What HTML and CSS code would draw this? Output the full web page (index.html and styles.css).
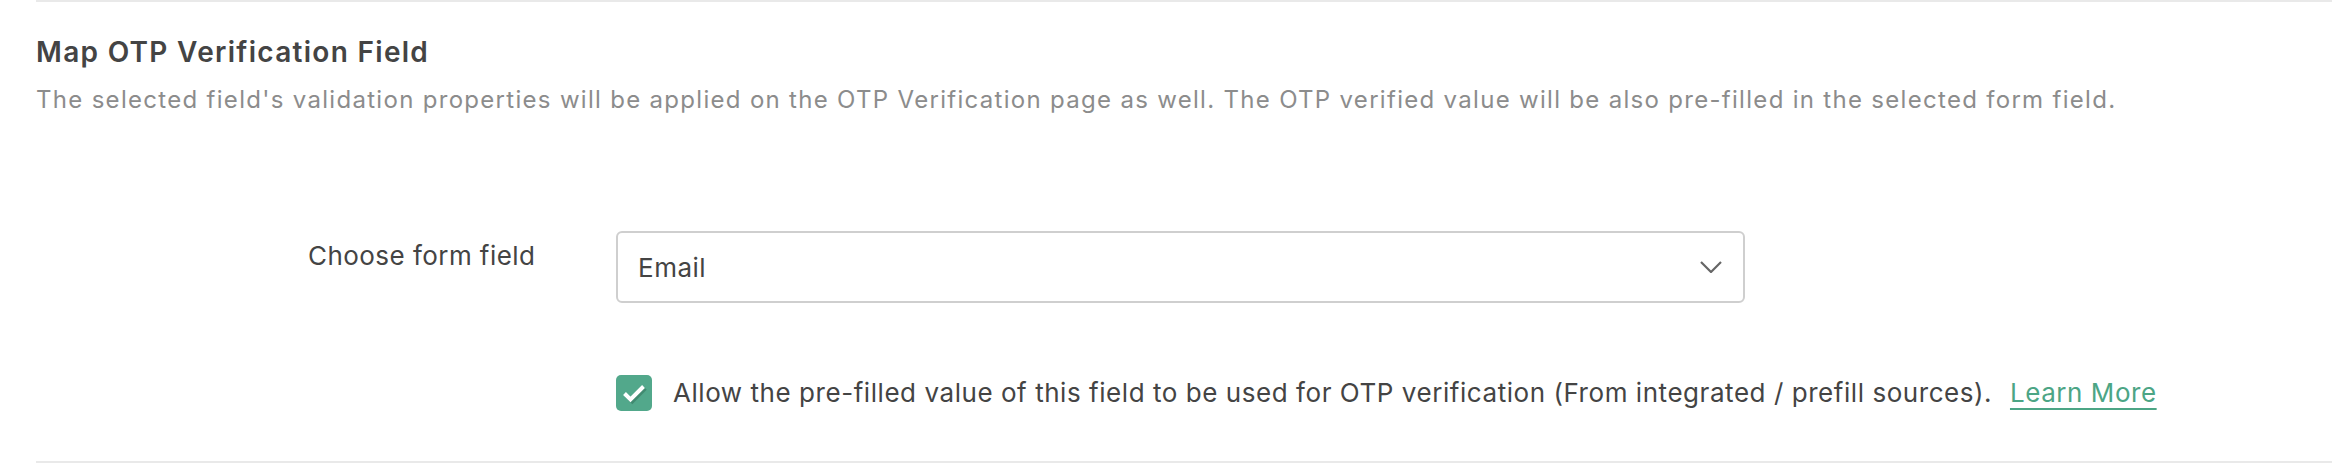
FILE: index.html
```html
<!DOCTYPE html>
<html lang="en">
<head>
    <meta charset="UTF-8">
    <title>Map OTP Verification Field</title>
    <link rel="stylesheet" href="styles.css">
</head>
<body>
    <div class="section">
        <h2 class="section-title">Map OTP Verification Field</h2>
        <p class="section-desc">The selected field's validation properties will be applied on the OTP Verification page as well. The OTP verified value will be also pre-filled in the selected form field.</p>

        <div class="form-row">
            <label class="form-label">Choose form field</label>
            <div class="form-control">
                <div class="select-box">
                    <span class="select-value">Email</span>
                    <svg class="select-arrow" width="22" height="12" viewBox="0 0 22 12">
                        <path d="M1 1 L11 11 L21 1" fill="none" stroke="#666" stroke-width="2.2"/>
                    </svg>
                </div>
            </div>
        </div>

        <div class="check-row">
            <span class="checkbox">
                <svg width="36" height="36" viewBox="0 0 36 36">
                    <path d="M9 19 L15 25 L28 12" fill="none" stroke="#2f6e58" stroke-width="4" stroke-opacity="0.5" transform="translate(1.3 1.3)"/>
                    <path d="M8.5 18.5 L14.5 24.5 L27.5 11.5" fill="none" stroke="#fff" stroke-width="4"/>
                </svg>
            </span>
            <span class="check-text">Allow the pre-filled value of this field to be used for OTP verification (From integrated / prefill sources). <a class="learn-more" href="#">Learn More</a></span>
        </div>
    </div>
</body>
</html>
```

FILE: styles.css
```css
body {
    margin: 0;
    background-color: #fff;
    font-family: Inter, 'Noto Sans', sans-serif;
    color: #444;
}

.section {
    margin-left: 36px;
    border-top: 2px solid #e9e9e9;
    border-bottom: 2px solid #e9e9e9;
    padding-bottom: 50px;
}

.section-title {
    margin: 30px 0 0 0;
    font-size: 28px;
    line-height: 40px;
    font-weight: 600;
    letter-spacing: 1.3px;
    color: #444;
}

.section-desc {
    margin: 10px 0 0 0;
    font-size: 24px;
    line-height: 36px;
    letter-spacing: 1.3px;
    color: #8c8c8c;
}

.form-row {
    display: flex;
    align-items: flex-start;
    margin-top: 113px;
    padding-left: 272px;
}

.form-label {
    width: 308px;
    padding-top: 7px;
    font-size: 26px;
    line-height: 36px;
    letter-spacing: 0.45px;
    color: #444;
}

.form-control {
    width: 1129px;
}

.select-box {
    display: flex;
    align-items: center;
    justify-content: space-between;
    box-sizing: border-box;
    height: 72px;
    padding: 0 21px 0 20px;
    border: 2px solid #cfcfcf;
    border-radius: 6px;
}

.select-value {
    font-size: 26px;
    letter-spacing: 0.5px;
    color: #444;
}

.check-row {
    display: flex;
    align-items: center;
    gap: 21px;
    margin-top: 72px;
    padding-left: 580px;
}

.checkbox {
    display: flex;
    width: 36px;
    height: 36px;
    border-radius: 5px;
    background-color: #52a88b;
}

.check-text {
    font-size: 26px;
    line-height: 36px;
    letter-spacing: 0.55px;
    color: #444;
}

.learn-more {
    margin-left: 10px;
    color: #4ca585;
    text-decoration: underline;
    text-decoration-thickness: 2px;
    text-underline-offset: 6px;
}
```
